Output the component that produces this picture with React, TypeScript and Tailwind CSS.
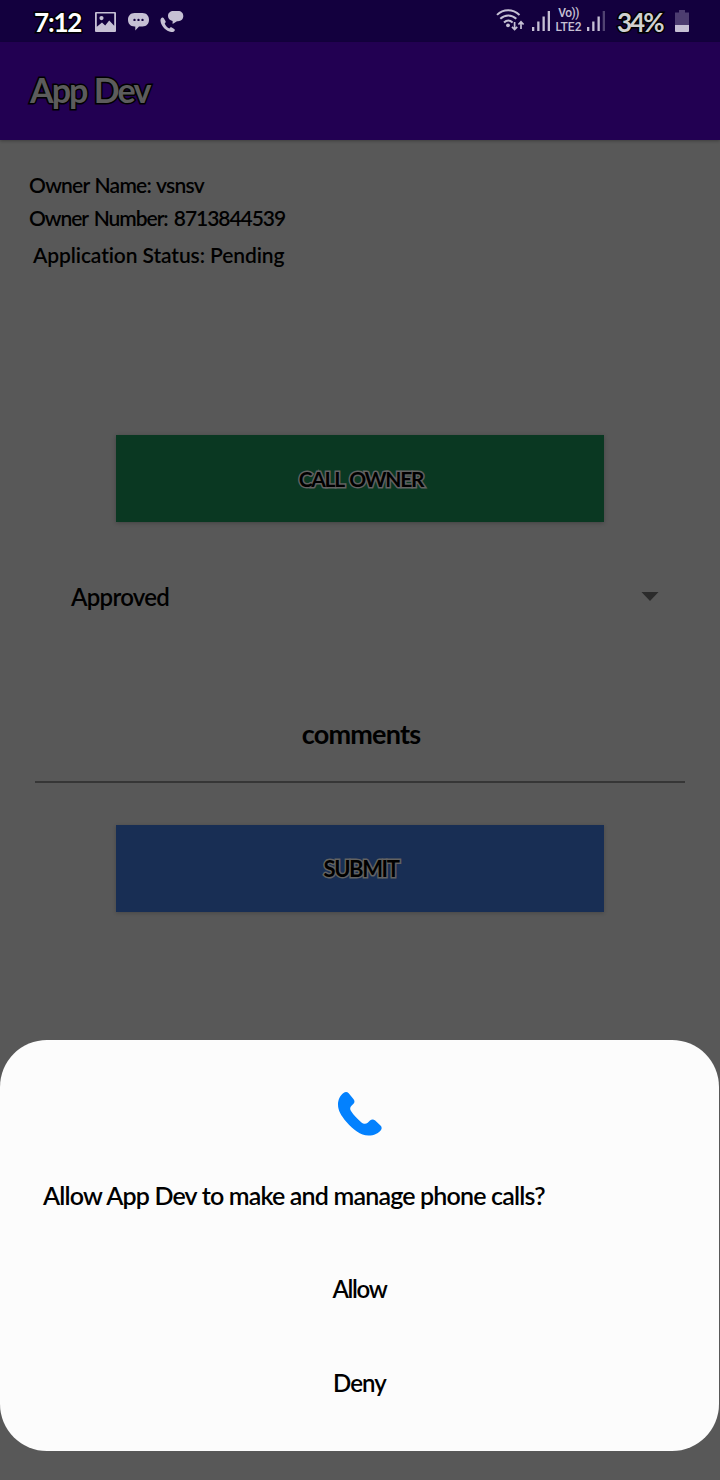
function ImageIcon() {
  return (
    <svg width="21" height="20" viewBox="0 0 21 20" className="block">
      <path
        fillRule="evenodd"
        fill="#c6c0d4"
        d="M1 0h19a1 1 0 0 1 1 1v18a1 1 0 0 1-1 1H1a1 1 0 0 1-1-1V1a1 1 0 0 1 1-1Zm.8 1.6v13.2l5.2-4.2 3.2 3 4-5 5 5.2V1.6ZM6.5 4a2.1 2.1 0 1 1 0 4.2 2.1 2.1 0 0 1 0-4.2Z"
      />
    </svg>
  );
}

function ChatIcon() {
  return (
    <svg width="21" height="18" viewBox="0 0 21 18" className="block">
      <path
        fill="#c6c0d4"
        d="M6.5 0h8C18.5 0 21 2.8 21 6.8s-2.500 6.700-6.500 6.700h-3.500L7.300 17.500v-4H6.500C2.500 13.500 0 10.800 0 6.800S2.500 0 6.500 0Z"
      />
      <circle cx="6.500" cy="6.900" r="1.200" fill="#13003e" />
      <circle cx="10.500" cy="6.900" r="1.200" fill="#13003e" />
      <circle cx="14.500" cy="6.900" r="1.200" fill="#13003e" />
    </svg>
  );
}

function CallChatIcon() {
  return (
    <svg width="24" height="22" viewBox="0 0 24 22" className="block">
      <path
        fill="#c6c0d4"
        d="M13.500 0h4.500c3.300 0 5.300 2 5.300 5s-2 5.200-5.300 5.200h-1L12.600 13v-3.100C9.800 9.500 8 7.700 8 5c0-3 2.200-5 5.500-5Z"
      />
      <path
        fill="#c6c0d4"
        d="M2.200 6.600C1 7 .300 8.200.500 10c.6 5.300 5.600 10.300 10.700 11 1.900.300 3.400-.400 3.600-1.700.100-.500-.2-1-.600-1.300l-2.400-1.600c-.6-.4-1.200-.3-1.600.200l-.8.9c-2-.9-4-3.200-4.700-5.100l.6-.6c.5-.5.600-1 .300-1.600L3.800 7.300c-.4-.6-1-.900-1.600-.7Z"
      />
    </svg>
  );
}

function WifiIcon() {
  return (
    <svg width="29" height="23" viewBox="0 0 29 23" className="block" fill="none" stroke="#c6c0d4">
      <path strokeWidth="2" d="M1 6.900C7.300.7 16.700.7 23.500 6.900" />
      <path strokeWidth="2" d="M4.300 10.800c4.700-4.500 11.200-4.500 16 0" />
      <path strokeWidth="2" d="M8 14.500c2.600-2.500 6-2.500 8.600 0" />
      <circle cx="12" cy="17.300" r="1.900" fill="#c6c0d4" stroke="none" />
      <path strokeWidth="1.700" d="M18.600 14v7.500M16 18.800l2.600 2.700 2.600-2.700M25 21V14M22.400 16.500l2.600-2.700 2.600 2.700" />
    </svg>
  );
}

function SignalIcon({ weak }: { weak?: boolean }) {
  return (
    <svg width="18" height="20" viewBox="0 0 18 20" className="block" fill="#c6c0d4">
      <rect x="0" y="16" width="2.300" height="4" />
      <rect x="5.200" y="10.500" width="2.300" height="9.500" />
      <rect x="10.500" y="5.500" width="2.300" height="14.500" />
      <rect x="15.700" y="0" width="2.300" height="20" opacity={weak ? 0.35 : 1} />
    </svg>
  );
}

function BatteryIcon() {
  return (
    <svg width="14" height="22" viewBox="0 0 14 22" className="block">
      <path fill="#4d3d70" d="M4 0h6v2.500h4V15H0V2.500h4Z" />
      <path fill="#c6c0d4" d="M0 15h14v6a1 1 0 0 1-1 1H1a1 1 0 0 1-1-1Z" />
    </svg>
  );
}

function PhoneIcon() {
  return (
    <svg width="44" height="44" viewBox="0 0 44 44" className="block">
      <path
        fill="#0381fe"
        d="M5.500 1C2 3.500 0 8 0 12.500c0 6 3 11 8.500 17.500 6.500 7.500 14 13.500 22 13.500 5.500 0 10-2 12.500-5.500 1-1.500.800-3-.300-4.200l-5.500-5.200c-1.700-1.600-3.700-1.500-5.200 0l-2.300 2.100c-2 1.800-4.200 1.400-6.500-.500-4-3.500-7.700-7.300-10.200-11.200-1.300-2-1-3.700.5-5.200l2-2c1.400-1.600 1.200-3.300-.1-4.800L10.700 1.300C9.200-.300 7.300-.400 5.500 1Z"
      />
    </svg>
  );
}

function StatusBar() {
  return (
    <div className="flex h-[42px] items-start justify-between bg-[#13003e]">
      <div className="flex items-start pl-[34px]">
        <span className="w-[61px] pt-[7px] text-[26px] leading-[30px] font-bold tracking-[-1.2px] text-white [-webkit-text-stroke:3px_#000] [paint-order:stroke_fill]">
          7:12
        </span>
        <div className="flex pt-[12px]">
          <ImageIcon />
        </div>
        <div className="flex pt-[13px] pl-[12px]">
          <ChatIcon />
        </div>
        <div className="flex pt-[11px] pl-[11px]">
          <CallChatIcon />
        </div>
      </div>
      <div className="flex items-start pr-[31px]">
        <div className="pt-[8px]">
          <WifiIcon />
        </div>
        <div className="pt-[11px] pl-[7px]">
          <SignalIcon />
        </div>
        <div className="flex w-[37px] flex-col items-center pt-[6px] font-[Roboto] text-[12px] leading-[14px] font-medium text-[#c6c0d4]">
          <span className="h-[14px] tracking-[-0.5px]">Vo))</span>
          <span className="h-[14px]">LTE2</span>
        </div>
        <div className="pt-[11px]">
          <SignalIcon weak />
        </div>
        <span className="w-[70px] pt-[7px] pl-[12px] text-[26px] leading-[30px] font-bold tracking-[-2px] text-[#d0d0d0] [-webkit-text-stroke:3px_#000] [paint-order:stroke_fill]">
          34%
        </span>
        <div className="pt-[10px]">
          <BatteryIcon />
        </div>
      </div>
    </div>
  );
}

function PermissionSheet() {
  return (
    <section className="mr-px flex h-[411px] flex-col items-center rounded-[47px] bg-[#fcfcfc] pt-[52px] text-[25px] leading-[32px] font-semibold text-black">
      <PhoneIcon />
      <p className="mt-[43px] w-full pl-[43px] tracking-[-0.82px] whitespace-nowrap">
        Allow App Dev to make and manage phone calls?
      </p>
      <button className="mt-[62px] h-[32px] text-[24px] tracking-[-1.3px]">Allow</button>
      <button className="mt-[62px] h-[32px] text-[24px] tracking-[-0.9px]">Deny</button>
    </section>
  );
}

export default function App() {
  return (
    <div className="flex h-[1480px] w-[720px] flex-col overflow-hidden bg-[#585858] font-[Lato,sans-serif] text-black">
      <StatusBar />
      <header className="flex h-[98px] items-center bg-[#220052] pb-[2px] pl-[30px] shadow-[0_1px_3px_rgba(0,0,0,0.3)]">
        <h1 className="text-[34px] leading-[44px] font-bold tracking-[-1.9px] whitespace-nowrap text-[#5c5c5c] [-webkit-text-stroke:3px_#000] [paint-order:stroke_fill] [word-spacing:1px]">
          App Dev
        </h1>
      </header>
      <main className="flex h-[900px] flex-col">
        <div className="flex flex-col pt-[29px] pl-[29px] text-[21px] leading-[32px] font-semibold whitespace-nowrap">
          <p className="tracking-[-0.75px] [word-spacing:1px]">Owner Name: vsnsv</p>
          <p className="mt-px tracking-[-1.05px] [word-spacing:2px]">Owner Number: 8713844539</p>
          <p className="mt-[5px] pl-[4px] tracking-[-0.1px]">Application Status: Pending</p>
        </div>
        <button className="mt-[164px] ml-[116px] h-[87px] w-[488px] bg-[#0a3822] pl-[2px] text-[21px] font-bold tracking-[-1.25px] shadow-[0_1px_4px_rgba(0,0,0,0.25)] [-webkit-text-stroke:3px_#626262] [paint-order:stroke_fill] [word-spacing:2px]">
          CALL OWNER
        </button>
        <div className="mt-[58px] flex h-[34px] items-center justify-between pr-[61px] pl-[71px]">
          <span className="text-[24px] font-semibold tracking-[-0.7px]">Approved</span>
          <svg width="18" height="9" viewBox="0 0 18 9" className="mb-px block">
            <path d="M0.500 0h17L9 9Z" fill="#2b2b2b" />
          </svg>
        </div>
        <div className="mx-[35px] mt-[102px] flex h-[67px] justify-center border-b-2 border-[#363636] pl-[2px] text-[27px] leading-[36px] font-bold">
          <span className="tracking-[-0.8px]">comments</span>
        </div>
        <button className="mt-[42px] ml-[116px] h-[87px] w-[488px] bg-[#182e54] pl-[2px] text-[22px] font-bold tracking-[-1.4px] shadow-[0_1px_4px_rgba(0,0,0,0.2)] [-webkit-text-stroke:3px_#626262] [paint-order:stroke_fill]">
          SUBMIT
        </button>
      </main>
      <PermissionSheet />
    </div>
  );
}
